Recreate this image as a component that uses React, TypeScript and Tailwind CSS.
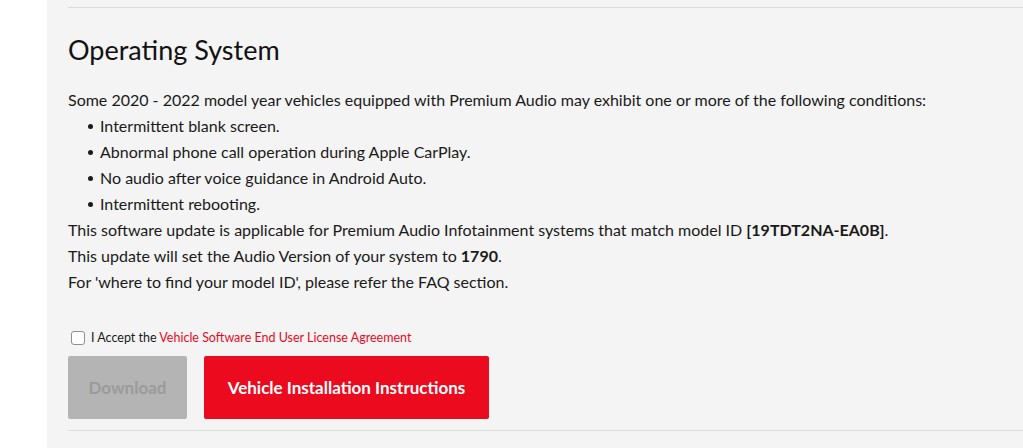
import React from "react";

const items = [
  "Intermittent blank screen.",
  "Abnormal phone call operation during Apple CarPlay.",
  "No audio after voice guidance in Android Auto.",
  "Intermittent rebooting.",
];

export default function App() {
  return (
    <div className="flex h-[448px] w-full overflow-hidden bg-white text-[#1a1a1a]" style={{ fontFamily: "Lato, 'Open Sans', sans-serif" }}>
      <div className="w-[47px] shrink-0 bg-white" />
      <div className="flex-1 bg-[#f4f4f4] pl-[21px]">
        <div className="mt-[7px] border-t border-[#dcdcdc]" />
        <h2 className="mt-[26px] text-[27px] leading-[32px] font-normal text-[#111]">Operating System</h2>
        <div className="mt-[21px] text-[16px] leading-[26px]">
          <p>Some 2020 - 2022 model year vehicles equipped with Premium Audio may exhibit one or more of the following conditions:</p>
          <ul className="pl-[20px]">
            {items.map((t) => (
              <li key={t} className="flex items-center">
                <span className="mr-[7px] h-[5px] w-[5px] shrink-0 rounded-full bg-[#1a1a1a]" />
                <span>{t}</span>
              </li>
            ))}
          </ul>
          <p>
            This software update is applicable for Premium Audio Infotainment systems that match model ID <b>[19TDT2NA-EA0B]</b>.
          </p>
          <p>
            This update will set the Audio Version of your system to <b>1790</b>.
          </p>
          <p>For 'where to find your model ID', please refer the FAQ section.</p>
        </div>
        <label className="mt-[35px] flex items-center gap-[6px] pl-[3px] text-[12.5px] leading-[16px]">
          <span className="h-[14px] w-[14px] rounded-[3px] border border-[#8f8f8f] bg-white" />
          <span>
            I Accept the <span className="text-[#eb0a1e]">Vehicle Software End User License Agreement</span>
          </span>
        </label>
        <div className="mt-[10px] flex gap-[17px]">
          <button className="h-[63px] w-[119px] rounded-[2px] bg-[#b4b4b4] text-[17px] font-bold text-[#9b9b9b]">Download</button>
          <button className="h-[63px] w-[285px] rounded-[2px] bg-[#eb0a1e] text-[17px] font-bold text-white">Vehicle Installation Instructions</button>
        </div>
        <div className="mt-[11px] border-t border-[#dcdcdc]" />
      </div>
    </div>
  );
}
